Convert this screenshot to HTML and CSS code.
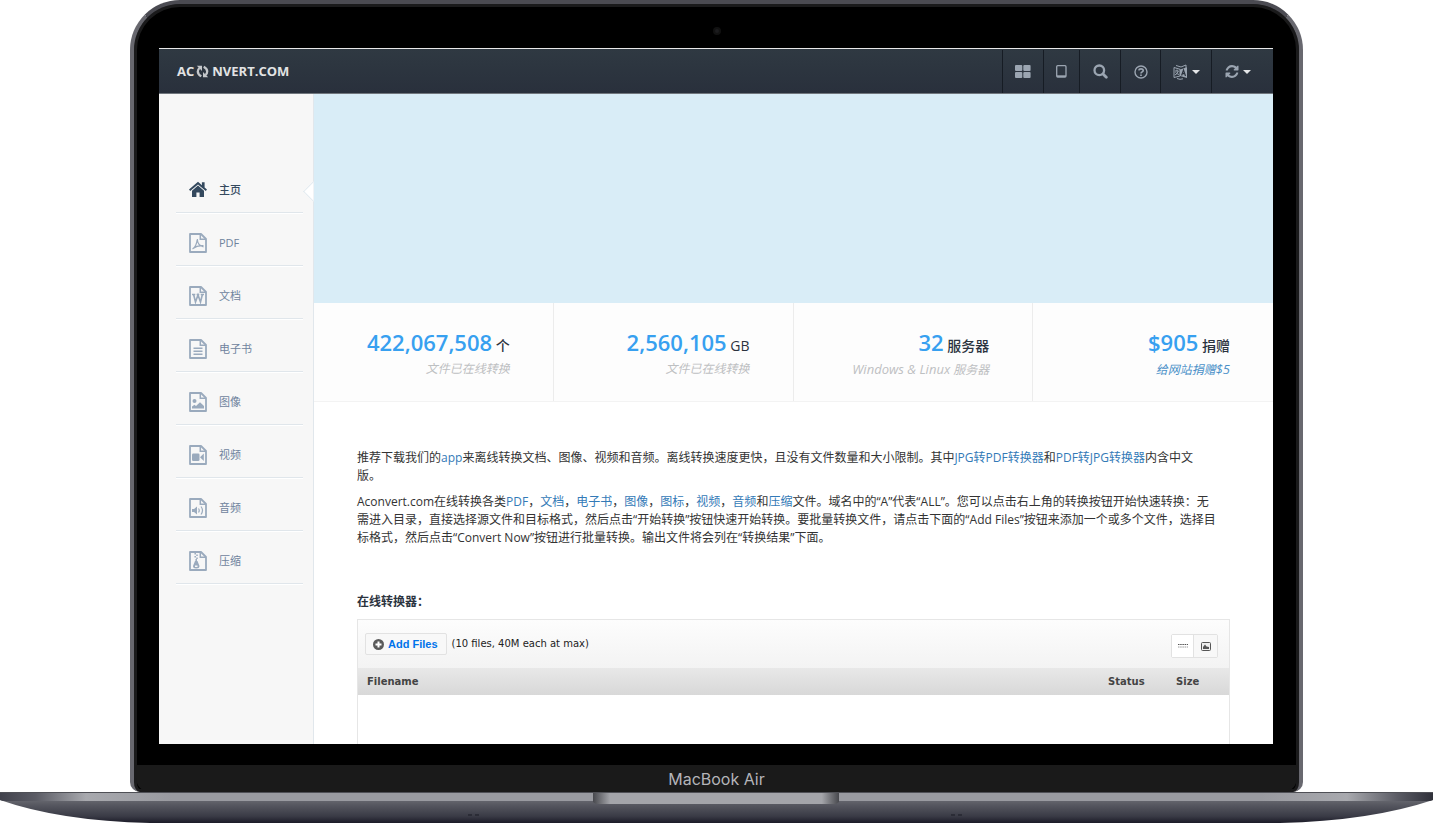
FILE: index.html
```html
<!DOCTYPE html>
<html lang="zh-CN">
<head>
<meta charset="utf-8">
<title>Aconvert.com</title>
<link rel="stylesheet" href="styles.css">
</head>
<body>
<svg class="defs" aria-hidden="true">
  <symbol id="doc" viewBox="0 0 18 20"><path fill="none" stroke="currentColor" stroke-width="1.8" stroke-linejoin="round" d="M1 1H12L17 6V19H1Z"/><path fill="none" stroke="currentColor" stroke-width="1.5" d="M11.300 1V6.300H17"/></symbol>
  <symbol id="refresh" viewBox="0 0 1536 1536"><path fill="currentColor" d="M1511 928q0 5-1 7-64 268-268 434.500T764 1536q-146 0-282.500-55T238 1324l-129 129q-19 19-45 19t-45-19-19-45V960q0-26 19-45t45-19h448q26 0 45 19t19 45-19 45l-137 137q71 66 161 102t187 36q134 0 250-65t186-179q11-17 53-117 8-23 30-23h192q13 0 22.500 9.500t9.500 22.500zm25-800v448q0 26-19 45t-45 19h-448q-26 0-45-19t-19-45 19-45l138-138Q969 256 768 256q-134 0-250 65T332 500q-11 17-53 117-8 23-30 23H50q-13 0-22.500-9.500T18 608v-7q65-268 270-434.500T768 0q146 0 284 55.500T1297 212l130-129q19-19 45-19t45 19 19 45z"/></symbol>
</svg>
<div class="laptop">
  <div class="lid">
    <span class="camera"></span>
    <div class="screen">
      <header class="topbar">
        <a class="logo" href="#">AC<svg class="logo-icon" viewBox="0 0 13 13"><g fill="none" stroke="currentColor" stroke-width="2.300"><path d="M5.300 11.300Q1.800 9.500 1.800 6.500Q1.800 4.500 3.500 3"/><path d="M7.700 1.700Q11.200 3.500 11.200 6.500Q11.200 8.500 9.500 10"/></g><path fill="currentColor" d="M.8 .7H6V6ZM12.200 12.300H7V7Z"/></svg>NVERT.COM</a>
        <nav class="tools">
          <button class="tool tool-grid" aria-label="网格"><svg width="16" height="13" viewBox="0 0 16 13" fill="currentColor"><rect width="7.300" height="6" rx="1"/><rect x="8.300" width="7.300" height="6" rx="1"/><rect y="7" width="7.300" height="6" rx="1"/><rect x="8.300" y="7" width="7.300" height="6" rx="1"/></svg></button>
          <button class="tool tool-tablet" aria-label="平板"><svg width="11" height="13" viewBox="0 0 11 13"><rect x=".7" y=".7" width="9.300" height="11.300" rx="1" fill="none" stroke="currentColor" stroke-width="1.300"/><path fill="currentColor" d="M1 10.300H10V12H1Z"/></svg></button>
          <button class="tool tool-search" aria-label="搜索"><svg width="15" height="15" viewBox="0 0 15 15" fill="none" stroke="currentColor" stroke-width="2.300"><circle cx="6.300" cy="6.300" r="4.800"/><path stroke-width="2.800" stroke-linecap="round" d="M10 10L13.300 13.300"/></svg></button>
          <button class="tool tool-help" aria-label="帮助"><svg width="14" height="14" viewBox="0 0 14 14" fill="none" stroke="currentColor"><circle cx="7" cy="7" r="6" stroke-width="1.400"/><path stroke-width="1.700" d="M4.800 5.400Q5 3.800 7 3.800Q9.200 3.800 9.200 5.500Q9.200 6.500 8 7Q7 7.500 7 8.500M7 9.400V11"/></svg></button>
          <button class="tool tool-lang" aria-label="语言"><svg width="15" height="16" viewBox="0 0 15 16"><path fill="none" stroke="currentColor" d="M1 3.500L7 5.300V12L1 13.500ZM3 1.500L8 3L13 1V4M2 7H5.500M4 5.500V7M5.300 7Q4.500 10 2 11M2.500 8.500Q4 10 6 10.500M4 14.500Q7 16 10 14.800"/><path fill="currentColor" d="M7 5.500L14 3.300V14L7 12Z"/><path fill="none" stroke="#2b333e" stroke-width="1.200" d="M8.600 11.500L10.500 6L12.500 12M9.200 9.700H11.800"/></svg><i class="caret"></i></button>
          <button class="tool tool-convert" aria-label="转换"><svg width="14" height="13"><use href="#refresh"/></svg><i class="caret"></i></button>
        </nav>
      </header>
      <div class="body">
        <aside class="sidebar">
          <ul class="menu">
            <li class="menu-item active"><a href="#"><svg class="menu-icon" viewBox="0 0 18 20" fill="currentColor"><path d="M9 1.800L0 9.500L1.200 11L9 4.400L16.800 11L18 9.500L15.600 7.400V2.200H12.900V5.200Z"/><path d="M9 5.600L3 10.700V17H7.400V12.500H10.600V17H15V10.700Z"/></svg>主页</a></li>
            <li class="menu-item"><a href="#"><svg class="menu-icon" viewBox="0 0 18 20"><use href="#doc"/><path fill="none" stroke="currentColor" stroke-width="1.200" d="M3.500 16Q7.500 13.500 8.300 6Q8.500 12.500 14.500 13.800M4 15.500Q8 12.300 14.500 12.700"/></svg>PDF</a></li>
            <li class="menu-item"><a href="#"><svg class="menu-icon" viewBox="0 0 18 20"><use href="#doc"/><path fill="none" stroke="currentColor" stroke-width="1.600" d="M3 8.500H6.300M7.600 8.500H10.300M11.700 8.500H15M4.600 8.500L6.500 16L9 9L11.500 16L13.400 8.500"/></svg>文档</a></li>
            <li class="menu-item"><a href="#"><svg class="menu-icon" viewBox="0 0 18 20"><use href="#doc"/><path fill="none" stroke="currentColor" stroke-width="1.500" d="M4.500 9.300H13.500M4.500 12.300H13.500M4.500 15.300H13.500"/></svg>电子书</a></li>
            <li class="menu-item"><a href="#"><svg class="menu-icon" viewBox="0 0 18 20"><use href="#doc"/><circle cx="5.500" cy="9" r="2" fill="currentColor"/><path fill="currentColor" d="M3 16.500V14.500L5.500 12.800L7 14L11 10.300L15 14V16.500Z"/></svg>图像</a></li>
            <li class="menu-item"><a href="#"><svg class="menu-icon" viewBox="0 0 18 20"><use href="#doc"/><rect x="3" y="8.500" width="7.500" height="7.500" rx="1.300" fill="currentColor"/><path fill="currentColor" d="M11 12.200L14.800 8.500V16Z"/></svg>视频</a></li>
            <li class="menu-item"><a href="#"><svg class="menu-icon" viewBox="0 0 18 20"><use href="#doc"/><path fill="currentColor" d="M3 11H5L8 8.500V16.500L5 14H3Z"/><path fill="none" stroke="currentColor" stroke-width="1.200" d="M9.500 10.500Q11 12.500 9.500 14.500M12 8.500Q15 12.500 12 16.500"/></svg>音频</a></li>
            <li class="menu-item"><a href="#"><svg class="menu-icon" viewBox="0 0 18 20"><use href="#doc"/><path fill="none" stroke="currentColor" stroke-width="1.500" d="M6.200 2V3.500M8 3.500V5M6.200 5V6.500M8 6.500V8M7.200 8V11"/><path fill="currentColor" fill-rule="evenodd" d="M6 10H8.500L10.500 15Q10.500 17.500 7.200 17.500Q4 17.500 4 15ZM6 14.500V16H8.500V14.500Z"/></svg>压缩</a></li>
          </ul>
        </aside>
        <main class="main">
          <div class="hero"></div>
          <section class="stats">
            <div class="stat"><p class="figure"><strong>422,067,508</strong> 个</p><p class="caption">文件已在线转换</p></div>
            <div class="stat"><p class="figure"><strong>2,560,105</strong> GB</p><p class="caption">文件已在线转换</p></div>
            <div class="stat"><p class="figure"><strong>32</strong> 服务器</p><p class="caption"><span class="latin">Windows &amp; Linux</span> 服务器</p></div>
            <div class="stat"><p class="figure"><strong>$905</strong> 捐赠</p><p class="caption"><a href="#">给网站捐赠<span class="latin">$5</span></a></p></div>
          </section>
          <section class="content">
            <p>推荐下载我们的<a href="#">app</a>来离线转换文档、图像、视频和音频。离线转换速度更快，且没有文件数量和大小限制。其中<a href="#">JPG转PDF转换器</a>和<a href="#">PDF转JPG转换器</a>内含中文<br>版。</p>
            <p>Aconvert.com在线转换各类<a href="#">PDF</a>，<a href="#">文档</a>，<a href="#">电子书</a>，<a href="#">图像</a>，<a href="#">图标</a>，<a href="#">视频</a>，<a href="#">音频</a>和<a href="#">压缩</a>文件。域名中的“A”代表“ALL”。您可以点击右上角的转换按钮开始快速转换：无<br>需进入目录，直接选择源文件和目标格式，然后点击“开始转换”按钮快速开始转换。要批量转换文件，请点击下面的“Add Files”按钮来添加一个或多个文件，选择目<br>标格式，然后点击“Convert Now”按钮进行批量转换。输出文件将会列在“转换结果”下面。</p>
            <h2>在线转换器：</h2>
            <div class="uploader">
              <div class="uploader-bar">
                <button class="add"><svg width="11" height="11" viewBox="0 0 11 11"><circle cx="5.500" cy="5.500" r="5.500" fill="#5a5a5a"/><path stroke="#fff" stroke-width="2" d="M5.500 2.500V8.500M2.500 5.500H8.500"/></svg>Add Files</button>
                <span class="limit">(10 files, 40M each at max)</span>
                <div class="views">
                  <button class="view selected" aria-label="List"><svg width="10" height="4" viewBox="0 0 10 4"><path fill="none" stroke="#555" stroke-dasharray="1.500 .7" d="M0 .5H10"/><path fill="none" stroke="#999" stroke-dasharray="1.500 .7" d="M0 3H10"/></svg></button>
                  <button class="view" aria-label="Thumbs"><svg width="10" height="9" viewBox="0 0 10 9"><rect x=".5" y=".5" width="9" height="8" rx="1" fill="#eee" stroke="#555"/><path fill="#555" d="M2 7V5L4 2.500L5.500 4.500L8 5V7Z"/></svg></button>
                </div>
              </div>
              <table class="files">
                <thead><tr><th>Filename</th><th class="status">Status</th><th class="size">Size</th></tr></thead>
                <tbody><tr><td colspan="3"></td></tr></tbody>
              </table>
            </div>
          </section>
        </main>
      </div>
    </div>
    <div class="chin">MacBook Air</div>
  </div>
  <svg class="base" viewBox="0 0 1433 31" preserveAspectRatio="none" aria-hidden="true">
    <defs>
      <linearGradient id="edge"><stop offset="0" stop-color="#41424c"/><stop offset=".025" stop-color="#5b5c65"/><stop offset=".06" stop-color="#a8a9ae"/><stop offset=".12" stop-color="#999aa0"/><stop offset=".88" stop-color="#999aa0"/><stop offset=".94" stop-color="#a8a9ae"/><stop offset=".975" stop-color="#5b5c65"/><stop offset="1" stop-color="#30313a"/></linearGradient>
      <linearGradient id="under" x2="0" y2="1"><stop offset="0" stop-color="#66676e"/><stop offset=".25" stop-color="#54555e"/><stop offset=".7" stop-color="#3a3b46"/><stop offset="1" stop-color="#1b1b27"/></linearGradient>
      <linearGradient id="notch"><stop offset="0" stop-color="#47484d"/><stop offset=".07" stop-color="#a4a5aa"/><stop offset=".93" stop-color="#a4a5aa"/><stop offset="1" stop-color="#47484d"/></linearGradient>
    </defs>
    <path fill="url(#under)" d="M0 8H1433Q1370 29 1280 31H150Q60 29 0 8Z"/>
    <path fill="url(#edge)" d="M0 0H1433V8L1430 9H3L0 8Z"/>
    <path fill="#4f5056" d="M0 0H1433V1H0Z"/>
    <path fill="url(#notch)" d="M593 1H839V10L836 12H596L593 10Z"/>
    <path stroke="#2b2c36" stroke-width="2" stroke-dasharray="4 3" d="M468 23H482M951 23H965"/>
  </svg>
</div>
</body>
</html>
```
FILE: styles.css
```css
* { box-sizing: border-box; }
body { margin: 0; background: #fff; font: 12px/18px "Open Sans", "Noto Sans CJK SC", sans-serif; color: #333; }
p, h2, ul { margin: 0; padding: 0; }
a { color: #337ab7; text-decoration: none; }
button { font: inherit; color: inherit; margin: 0; padding: 0; border: 0; background: none; cursor: pointer; }
svg { display: block; flex: none; }
.defs { position: absolute; width: 0; height: 0; }

.laptop { display: flex; flex-direction: column; height: 100vh; min-height: 480px; }
.lid {
  position: relative; flex: 1; min-height: 0; margin: 0 130px;
  display: flex; flex-direction: column;
  padding: 44px 3px 0; border: 4px solid #68686f; border-bottom: 0;
  border-top-color: #4b4b52;
  border-radius: 50px 50px 10px 10px; background: #000;
  box-shadow: inset 0 0 0 3px #1a1a1b;
}
.camera { position: absolute; top: 23px; left: 50%; width: 8px; height: 8px; margin-left: -4px; border-radius: 50%; background: #1c1c1e; border: 2px solid #111; }
.screen { flex: 1; min-height: 0; margin: 0 23px 0 22px; display: flex; flex-direction: column; overflow: hidden; background: #fff; border-top: 1px solid #e8e8e8; }
.chin { margin: 21px -1px 0; height: 27px; border-radius: 0 0 14px 14px; background: #1a1a1a; color: #b4b4b9; font: 16px/28px Inter, sans-serif; text-align: center; }
.base { width: 100%; height: 31px; }

.topbar { display: flex; height: 45px; flex: none; justify-content: space-between; background: linear-gradient(#2f3942, #29303c); border-bottom: 1px solid #70767d; }
.logo { display: flex; align-items: center; padding-left: 18px; color: #e2e3e4; font-size: 13px; font-weight: 700; }
.logo-icon { width: 13px; height: 13px; margin: 0 3px 0 2px; color: #c4c7ca; }
.tools { display: flex; padding-top: 1px; color: #9ba5b1; }
.tool { display: flex; align-items: center; justify-content: center; gap: 4px; border-left: 1px solid #161c24; }
.tool-grid { width: 41px; }
.tool-tablet { width: 36px; }
.tool-search { width: 41px; }
.tool-help { width: 40px; }
.tool-lang { width: 51px; }
.tool-convert { width: 62px; padding-right: 10px; }
.caret { border: 4px solid transparent; border-top-color: #e4e6e8; border-bottom: 0; }

.body { display: flex; flex: 1; min-height: 0; }
.sidebar { flex: none; width: 155px; padding: 66px 10px 0 17px; background: #f7f7f7; border-right: 1px solid #e1e7ec; }
.menu { list-style: none; }
.menu-item { position: relative; border-bottom: 1px solid #e0e6eb; box-shadow: 0 1px #fff; }
.menu-item a { display: flex; align-items: center; gap: 12px; height: 52px; padding: 8px 0 0 13px; color: #6f839d; font-size: 11px; }
.menu-icon { width: 18px; height: 20px; color: #9aaabd; }
.menu-item.active a, .active .menu-icon { color: #34495e; }
.menu-item.active a { font-weight: 500; }
.active::after { content: ""; position: absolute; right: -18px; top: 24px; width: 14px; height: 14px; transform: rotate(45deg); background: #fff; border: solid #dce6ec; border-width: 0 0 1px 1px; clip-path: polygon(0 0, 100% 100%, 0 100%); }

.main { flex: 1; min-width: 0; }
.hero { height: 209px; background: #d9edf7; }
.stats { display: grid; grid-template-columns: repeat(4, 1fr); height: 99px; background: #fdfdfd; border-bottom: 1px solid #f3f3f3; }
.stat { padding: 25px 43px 0 0; text-align: right; border-right: 1px solid #ececec; }
.stat:last-child { border-right: 0; }
.figure { font-size: 14px; line-height: 28px; font-weight: 500; color: #2b333e; }
.figure strong { font-size: 22px; font-weight: 600; color: #37a0f0; }
.caption { font-style: italic; color: #bdc0c2; }
.caption .latin { font-size: 13px; }
.caption a { color: #4a90c8; }

.content { padding: 47px 43px 0; }
.content p { margin-bottom: 8px; white-space: nowrap; }
.content h2 { margin-top: 46px; font-size: 12px; line-height: 18px; font-weight: 600; color: #2b333e; }
.uploader { margin-top: 8px; border: 1px solid #e6e6e6; font-family: "DejaVu Sans", sans-serif; font-size: 10px; }
.uploader-bar { display: flex; align-items: flex-start; height: 48px; padding: 13px 11px 0 7px; background: linear-gradient(#fdfdfd, #f3f3f3); color: #222; }
.add { display: flex; align-items: center; gap: 4px; height: 22px; padding: 0 8px 0 7px; border: 1px solid #e2e2e2; border-radius: 2px; background: #f8f8f8; color: #0073ea; font: bold 11px/20px "Liberation Sans", sans-serif; }
.limit { margin-left: 5px; line-height: 22px; }
.views { display: flex; margin: 1px 0 0 auto; border: 1px solid #e2e2e2; border-radius: 2px; }
.view { display: flex; align-items: center; justify-content: center; width: 23px; height: 22px; background: #f8f8f8; }
.view.selected { width: 22px; background: #fff; border-right: 1px solid #e2e2e2; }
.files { width: 100%; border-collapse: collapse; }
.files thead { background: linear-gradient(#e8e8e8, #d8d8d8); }
.files th { height: 27px; padding: 0 0 0 9px; text-align: left; font-size: 10px; color: #444; }
.files .status { width: 68px; padding-left: 0; }
.files .size { width: 53px; padding-left: 0; }
.files td { height: 180px; padding: 0; }
```
